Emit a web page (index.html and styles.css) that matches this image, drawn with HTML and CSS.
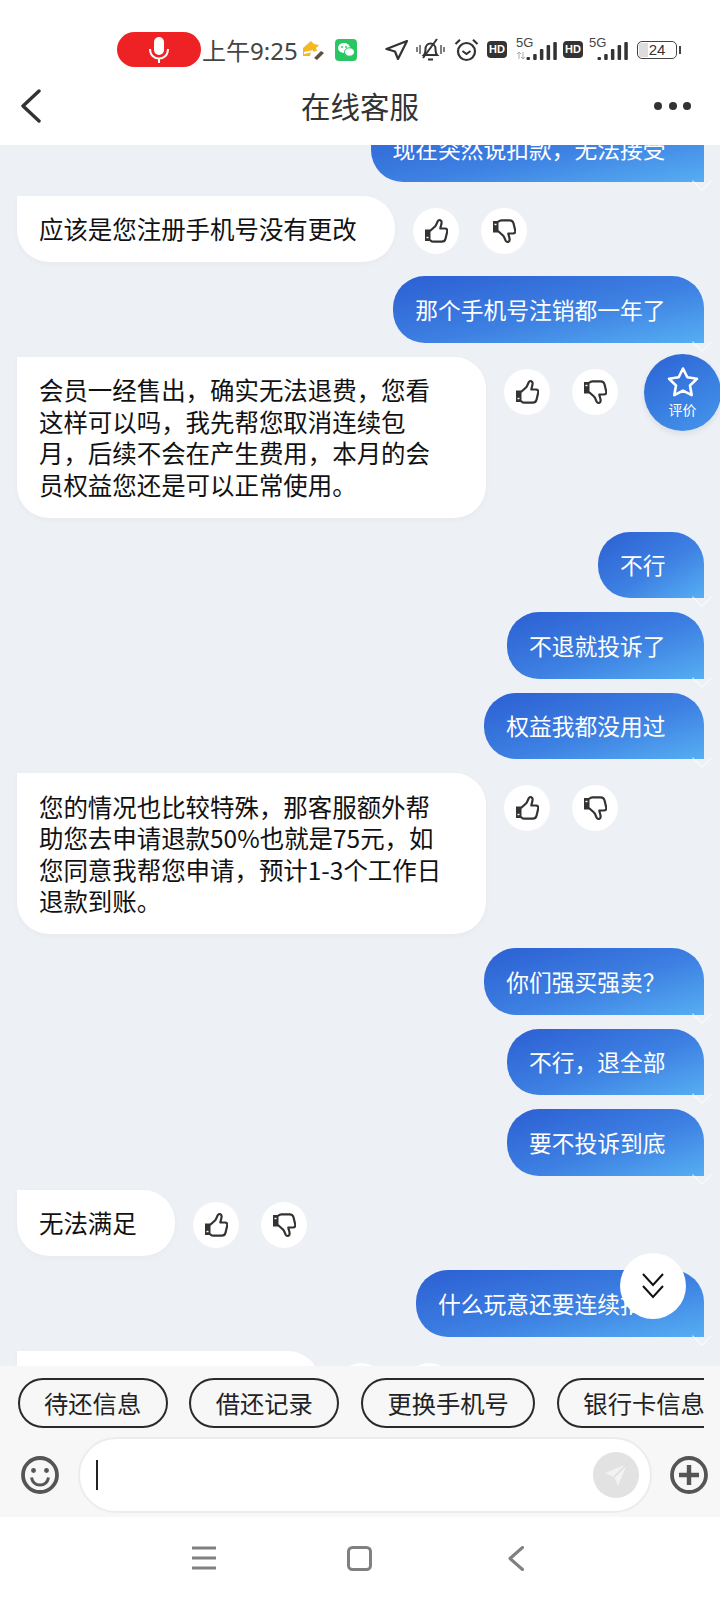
FILE: index.html
```html
<!DOCTYPE html>
<html lang="zh-CN">
<head>
    <meta charset="UTF-8">
    <meta name="viewport" content="width=device-width, initial-scale=1.0">
    <title>在线客服</title>
    <link rel="stylesheet" href="styles.css">
</head>
<body>
    <!-- Shared icons -->
    <svg class="icon-defs" aria-hidden="true">
        <symbol id="thumb" viewBox="0 0 24 26">
            <path d="M1 11.500h5.500v11.500H1z" fill="#333"/>
            <path d="M2.500 19.500h2" stroke="#fff" stroke-width="1.400"/>
            <path d="M6.500 12.500 11 8.500c1.800-1.800 1.800-4 3-5.600 1.400-1.700 3.800-.8 3.600 1.700-.1 2-1 3.900-1.300 5.900h4.700c1.800 0 2.600 1.500 2.200 3.200l-1.700 7c-.5 2-1.800 3-3.800 3H9.500c-1.300 0-2.300-.5-3-1.200" fill="none" stroke="#333" stroke-width="2.200" stroke-linejoin="round" stroke-linecap="round"/>
        </symbol>
        <symbol id="signal" viewBox="0 0 42 24">
            <rect x="11.500" y="19" width="3.500" height="3" rx="1" fill="#333"/>
            <rect x="18.200" y="16" width="3.500" height="6" rx="1" fill="#333"/>
            <rect x="24.900" y="11" width="3.500" height="11" rx="1" fill="#333"/>
            <rect x="31.600" y="7" width="3.500" height="15" rx="1" fill="#333"/>
            <rect x="38.300" y="4" width="3.500" height="18" rx="1" fill="#333"/>
        </symbol>
    </svg>

    <div class="top">
        <!-- Status bar -->
        <div class="status-bar">
            <div class="mic-pill">
                <svg width="24" height="28" viewBox="0 0 24 28">
                    <rect x="7" y="1" width="10" height="18" rx="5" fill="#fff"/>
                    <path d="M3 13c0 6 4 9.500 9 9.500s9-3.500 9-9.500" fill="none" stroke="#fff" stroke-width="2"/>
                    <path d="M12 22.500V27" stroke="#fff" stroke-width="2"/>
                </svg>
            </div>
            <span class="clock">上午9:25</span>
            <svg class="st-fox" width="22" height="20" viewBox="0 0 22 20">
                <path d="M1 8 9 1l3 3 5 1-3 3 1 3-6 1-1 4H1z" fill="#f5b81f"/>
                <path d="M2 12l9-2v2l-9 2z" fill="#fff"/>
                <path d="M12 18l7-7 3 2-7 7z" fill="#5f5040"/>
            </svg>
            <svg class="st-wechat" width="22" height="22" viewBox="0 0 22 22">
                <rect width="22" height="22" rx="4" fill="#2ac664"/>
                <ellipse cx="9" cy="9" rx="6" ry="5" fill="#fff"/>
                <ellipse cx="14.500" cy="13" rx="5" ry="4.200" fill="#fff" stroke="#2ac664"/>
                <circle cx="7" cy="8" r=".9" fill="#2ac664"/>
                <circle cx="11" cy="8" r=".9" fill="#2ac664"/>
            </svg>
            <svg class="st-arrow" width="23" height="20" viewBox="0 0 23 20">
                <path d="M22 1 1.500 9l8.500 2.500 3 7.500z" fill="none" stroke="#333" stroke-width="2.200" stroke-linejoin="round"/>
            </svg>
            <svg class="st-bell" width="29" height="24" viewBox="0 0 29 24">
                <path d="M8 17c1.500-1.500 1.500-3 1.500-6 0-3 2-5.500 5-5.500s5 2.500 5 5.500c0 3 0 4.500 1.500 6z" fill="none" stroke="#333" stroke-width="2"/>
                <path d="M12 21.500h5" stroke="#333" stroke-width="2"/>
                <path d="M7 20 21 1" stroke="#333" stroke-width="2"/>
                <path d="M1 9v5M4 7v9M25 7v9M28 9v5" stroke="#555" stroke-width="1.500"/>
            </svg>
            <svg class="st-alarm" width="25" height="24" viewBox="0 0 25 24">
                <circle cx="12.500" cy="13.500" r="8.500" fill="none" stroke="#333" stroke-width="2.200"/>
                <path d="M8.500 13l4 3 4-3" fill="none" stroke="#333" stroke-width="2"/>
                <path d="M1.500 6 6 1.800M23.500 6 19 1.800" stroke="#333" stroke-width="2.200"/>
            </svg>
            <span class="hd st-hd">HD</span>
            <div class="net st-net">
                <span class="net-label">5G</span>
                <svg class="net-bars" width="42" height="24"><use href="#signal"/></svg>
                <svg class="net-arrows" width="10" height="7" viewBox="0 0 10 7">
                    <path d="M3 0v7M1 2l2-2 2 2M7 7V0M5 5l2 2 2-2" fill="none" stroke="#aaa"/>
                </svg>
            </div>
            <span class="hd st-hd2">HD</span>
            <div class="net st-net2">
                <span class="net-label">5G</span>
                <svg class="net-bars" width="42" height="24"><use href="#signal"/></svg>
            </div>
            <div class="battery">
                <span class="battery-level"></span>
                <span class="battery-text">24</span>
            </div>
            <span class="battery-nub"></span>
        </div>

        <!-- Title bar -->
        <div class="title-bar">
            <svg class="back-icon" width="22" height="34" viewBox="0 0 22 34">
                <path d="M19 2 3 17l16 15" fill="none" stroke="#333" stroke-width="3.400" stroke-linecap="round" stroke-linejoin="round"/>
            </svg>
            <h1>在线客服</h1>
            <div class="dots"><span></span><span></span><span></span></div>
        </div>
    </div>

    <!-- Chat -->
    <div class="chat">
        <div class="chat-list">
            <div class="bubble me">现在突然说扣款，无法接受</div>

            <div class="row">
                <div class="bubble them">应该是您注册手机号没有更改</div>
                <div class="votes">
                    <span class="vote"><svg width="24" height="26"><use href="#thumb"/></svg></span>
                    <span class="vote down"><svg width="24" height="26"><use href="#thumb"/></svg></span>
                </div>
            </div>

            <div class="bubble me">那个手机号注销都一年了</div>

            <div class="row">
                <div class="bubble them wide">会员一经售出，确实无法退费，您看<br>这样可以吗，我先帮您取消连续包<br>月，后续不会在产生费用，本月的会<br>员权益您还是可以正常使用。</div>
                <div class="votes">
                    <span class="vote"><svg width="24" height="26"><use href="#thumb"/></svg></span>
                    <span class="vote down"><svg width="24" height="26"><use href="#thumb"/></svg></span>
                </div>
            </div>

            <div class="bubble me">不行</div>
            <div class="bubble me">不退就投诉了</div>
            <div class="bubble me">权益我都没用过</div>

            <div class="row">
                <div class="bubble them wide">您的情况也比较特殊，那客服额外帮<br>助您去申请退款50%也就是75元，如<br>您同意我帮您申请，预计1-3个工作日<br>退款到账。</div>
                <div class="votes">
                    <span class="vote"><svg width="24" height="26"><use href="#thumb"/></svg></span>
                    <span class="vote down"><svg width="24" height="26"><use href="#thumb"/></svg></span>
                </div>
            </div>

            <div class="bubble me">你们强买强卖？</div>
            <div class="bubble me">不行，退全部</div>
            <div class="bubble me">要不投诉到底</div>

            <div class="row">
                <div class="bubble them">无法满足</div>
                <div class="votes">
                    <span class="vote"><svg width="24" height="26"><use href="#thumb"/></svg></span>
                    <span class="vote down"><svg width="24" height="26"><use href="#thumb"/></svg></span>
                </div>
            </div>

            <div class="bubble me">什么玩意还要连续扣费</div>

            <div class="row">
                <div class="bubble them cut-off"></div>
                <div class="votes">
                    <span class="vote"></span>
                    <span class="vote down"></span>
                </div>
            </div>
        </div>

        <!-- Floating buttons -->
        <div class="rate-btn">
            <svg width="34" height="32" viewBox="0 0 34 32">
                <path d="M17 2.500l4.300 8.800 9.700 1.400-7 6.800 1.700 9.600-8.700-4.500-8.700 4.500 1.700-9.600-7-6.800 9.700-1.400z" fill="none" stroke="#fff" stroke-width="2.600" stroke-linejoin="round"/>
            </svg>
            <span>评价</span>
        </div>
        <div class="down-btn">
            <svg width="26" height="28" viewBox="0 0 26 28">
                <path d="M3 2l10 11L23 2M3 14l10 11 10-11" fill="none" stroke="#111" stroke-width="2"/>
            </svg>
        </div>
    </div>

    <!-- Quick replies and input -->
    <div class="panel">
        <div class="chips">
            <span class="chip">待还信息</span>
            <span class="chip">借还记录</span>
            <span class="chip">更换手机号</span>
            <span class="chip">银行卡信息</span>
        </div>
        <div class="input-row">
            <svg class="emoji-icon" width="38" height="38" viewBox="0 0 38 38">
                <circle cx="19" cy="19" r="17" fill="none" stroke="#555" stroke-width="3.800"/>
                <circle cx="12.500" cy="14.500" r="2.400" fill="#555"/>
                <circle cx="25.500" cy="14.500" r="2.400" fill="#555"/>
                <path d="M10.500 21.500c1 5 4.500 7.500 8.500 7.500s7.500-2.500 8.500-7.500" fill="none" stroke="#555" stroke-width="3"/>
            </svg>
            <div class="input-box">
                <span class="cursor"></span>
                <span class="send-btn">
                    <svg width="26" height="26" viewBox="0 0 26 26">
                        <path d="M24 2 2 11l9 4 4 9z" fill="#f2f2f2"/>
                        <path d="M24 2 11 15" stroke="#dcdcdc" stroke-width="1.400"/>
                    </svg>
                </span>
            </div>
            <svg class="plus-icon" width="38" height="38" viewBox="0 0 38 38">
                <circle cx="19" cy="19" r="17" fill="none" stroke="#555" stroke-width="3.800"/>
                <path d="M19 9v20M9 19h20" stroke="#555" stroke-width="4.400"/>
            </svg>
        </div>
    </div>

    <!-- System navigation -->
    <div class="nav-bar">
        <svg class="nav-menu" width="24" height="24" viewBox="0 0 24 24">
            <path d="M0 2h24M0 12h24M0 22h24" stroke="#808080" stroke-width="3.200"/>
        </svg>
        <svg class="nav-home" width="25" height="25" viewBox="0 0 25 25">
            <rect x="1.500" y="1.500" width="22" height="22" rx="4" fill="none" stroke="#808080" stroke-width="3"/>
        </svg>
        <svg class="nav-back" width="16" height="25" viewBox="0 0 16 25">
            <path d="M14.500 1.500 2 12.500l12.500 11" fill="none" stroke="#808080" stroke-width="3" stroke-linecap="round" stroke-linejoin="round"/>
        </svg>
    </div>
</body>
</html>
```

FILE: styles.css
```css
body {
    font-family: "Noto Sans CJK SC", "Noto Sans", sans-serif;
    background-color: #fff;
    margin: 0;
    padding: 0;
    width: 720px;
    height: 1600px;
    overflow: hidden;
}
.icon-defs {
    display: none;
}

/* Status bar */
.top {
    background-color: #fff;
    height: 145px;
}
.status-bar {
    display: flex;
    align-items: center;
    height: 35px;
    padding: 32px 0 1px 117px;
}
.status-bar svg {
    flex-shrink: 0;
}
.mic-pill {
    display: flex;
    align-items: center;
    justify-content: center;
    width: 84px;
    height: 35px;
    border-radius: 18px;
    background-color: #ee2225;
}
.clock {
    width: 100px;
    margin-left: 1px;
    font-family: "Noto Sans", "Noto Sans CJK SC", sans-serif;
    font-size: 24px;
    color: #444;
    white-space: nowrap;
}
.st-wechat {
    margin-left: 11px;
}
.st-arrow {
    margin-left: 28px;
}
.st-bell {
    margin-left: 8px;
}
.st-alarm {
    margin-left: 9px;
}
.hd {
    display: inline-block;
    width: 20px;
    height: 17px;
    border-radius: 4px;
    background-color: #333;
    color: #fff;
    font-family: "Liberation Sans", sans-serif;
    font-size: 11px;
    font-weight: bold;
    line-height: 17px;
    text-align: center;
}
.st-hd {
    margin-left: 8px;
}
.st-hd2 {
    margin-left: 6px;
}
.net {
    position: relative;
    width: 42px;
    height: 24px;
}
.st-net {
    margin-left: 8px;
}
.st-net2 {
    width: 40px;
    margin-left: 5px;
}
.st-net2 .net-bars {
    left: -2px;
}
.net-label {
    position: absolute;
    left: 1px;
    top: -3px;
    font-family: "Liberation Sans", sans-serif;
    font-size: 13px;
    color: #444;
}
.net-bars {
    position: absolute;
    left: 0;
    top: 0;
}
.net-arrows {
    position: absolute;
    left: 1px;
    top: 14px;
}
.battery {
    position: relative;
    box-sizing: border-box;
    width: 40px;
    height: 18px;
    margin-left: 9px;
    border: 1.5px solid #444;
    border-radius: 5px;
    overflow: hidden;
}
.battery-level {
    position: absolute;
    left: 1px;
    top: 1px;
    bottom: 1px;
    width: 9px;
    background-color: #ddd;
}
.battery-text {
    position: relative;
    display: block;
    font-family: "Liberation Sans", sans-serif;
    font-size: 15px;
    line-height: 15px;
    color: #333;
    text-align: center;
}
.battery-nub {
    width: 2px;
    height: 8px;
    margin-left: 2px;
    background-color: #444;
}

/* Title bar */
.title-bar {
    position: relative;
    display: flex;
    align-items: center;
    justify-content: center;
    box-sizing: border-box;
    height: 77px;
    padding-bottom: 4px;
}
.title-bar h1 {
    margin: 0;
    font-size: 29.5px;
    font-weight: normal;
    color: #333;
}
.back-icon {
    position: absolute;
    left: 20px;
    top: 21px;
}
.dots {
    position: absolute;
    left: 654px;
    top: 34px;
    display: flex;
    gap: 6.5px;
}
.dots span {
    width: 8px;
    height: 8px;
    border-radius: 50%;
    background-color: #333;
}

/* Chat */
.chat {
    position: relative;
    height: 1221px;
    background-color: #edf0f4;
    overflow: hidden;
}
.chat-list {
    display: flex;
    flex-direction: column;
    gap: 14px;
    margin-top: -29.8px;
}
.row {
    display: flex;
    align-items: flex-start;
    margin-left: 17px;
}
.bubble {
    box-sizing: border-box;
    padding: 17.5px 38px 17.5px 22px;
    line-height: 31.5px;
    white-space: nowrap;
}
.me {
    position: relative;
    align-self: flex-end;
    margin-right: 16.5px;
    border-radius: 32px 32px 0 32px;
    background: linear-gradient(to bottom right, #2c5fd3 0%, #3d80e2 55%, #56aef3 100%);
    color: #fff;
    font-size: 22.75px;
}
/* read tick under own messages */
.me::after {
    content: "";
    position: absolute;
    right: -5px;
    bottom: -6px;
    width: 13px;
    height: 13px;
    border-right: 1.5px solid rgba(255, 255, 255, 0.8);
    border-bottom: 1.5px solid rgba(255, 255, 255, 0.8);
    transform: rotate(45deg);
}
.them {
    border-radius: 0 32px 32px 32px;
    background-color: #fff;
    box-shadow: 0 2px 6px rgba(0, 0, 0, 0.03);
    color: #111;
    font-size: 24.45px;
}
.wide {
    width: 468.5px;
}
.cut-off {
    width: 303px;
    height: 66px;
}
.votes {
    display: flex;
    gap: 22px;
    margin: 12px 0 0 18px;
}
.vote {
    display: flex;
    align-items: center;
    justify-content: center;
    width: 46px;
    height: 46px;
    border-radius: 50%;
    background-color: #fff;
}
.down svg {
    transform: scaleY(-1);
}

/* Floating buttons */
.rate-btn {
    position: absolute;
    left: 644px;
    top: 209px;
    display: flex;
    flex-direction: column;
    align-items: center;
    box-sizing: border-box;
    width: 77px;
    height: 77px;
    padding-top: 12px;
    border-radius: 50%;
    background: linear-gradient(150deg, #2c62d4, #4597ec);
    box-shadow: 0 3px 6px rgba(0, 0, 0, 0.08);
    color: #fff;
}
.rate-btn span {
    margin-top: 2px;
    font-size: 14px;
    line-height: 18px;
}
.down-btn {
    position: absolute;
    left: 620px;
    top: 1108px;
    display: flex;
    align-items: center;
    justify-content: center;
    width: 66px;
    height: 66px;
    border-radius: 50%;
    background-color: #fff;
}

/* Quick replies and input */
.panel {
    height: 151px;
    background-color: #f7f7f7;
}
.chips {
    display: flex;
    gap: 21.5px;
    width: 703.5px;
    padding: 12px 0 0 17.5px;
    box-sizing: border-box;
    overflow: hidden;
}
.chip {
    flex-shrink: 0;
    box-sizing: border-box;
    height: 50px;
    padding: 0 24.5px;
    border: 2px solid #2a2a2a;
    border-radius: 25px;
    color: #222;
    font-size: 24.3px;
    line-height: 45px;
}
.input-row {
    display: flex;
    align-items: center;
    margin-top: 9px;
    padding-left: 21px;
}
.emoji-icon {
    margin-right: 19px;
}
.plus-icon {
    margin-left: 18px;
}
.input-box {
    display: flex;
    align-items: center;
    justify-content: space-between;
    box-sizing: border-box;
    width: 574px;
    height: 76px;
    padding: 0 11px 0 16px;
    border: 2px solid #ececec;
    border-radius: 38px;
    background-color: #fff;
}
.cursor {
    width: 2px;
    height: 30px;
    background-color: #222;
}
.send-btn {
    display: flex;
    align-items: center;
    justify-content: center;
    width: 46px;
    height: 46px;
    border-radius: 50%;
    background-color: #e2e2e2;
}

/* System navigation */
.nav-bar {
    display: flex;
    align-items: flex-start;
    padding: 29px 0 0 192px;
}
.nav-home {
    margin-left: 131px;
}
.nav-back {
    margin-left: 136px;
}
```
